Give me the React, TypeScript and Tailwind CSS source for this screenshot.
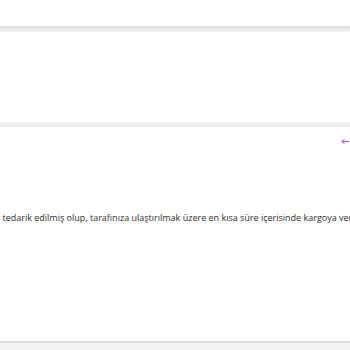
import React from 'react';

const App: React.FC = () => {
    return (
        <div className="w-[350px] h-[350px] overflow-hidden bg-white flex flex-col font-['Open_Sans',sans-serif]">
            {/* top strip */}
            <div className="h-[26px] bg-white" />
            <div className="h-[6px] bg-gradient-to-b from-[#dedede] to-[#f4f4f4]" />

            {/* first panel */}
            <div className="h-[90px] bg-white" />
            <div className="h-[5px] bg-gradient-to-b from-[#f1f1f1] to-[#ececec]" />

            {/* second panel */}
            <div className="h-[214px] bg-white overflow-hidden">
                <div className="flex justify-end pr-[1px] pt-[11px] h-[19px]">
                    <svg width="8" height="7" viewBox="0 0 8 7" fill="none" stroke="#a24fc2" strokeWidth="1">
                        <path d="M8 3.5H1M3.5 1L1 3.5L3.5 6" />
                    </svg>
                </div>
                <p className="mt-[67px] ml-[-9.5px] whitespace-nowrap text-[9px] leading-none text-[#2f2f2f]">
                    ile tedarik edilmiş olup, tarafınıza ulaştırılmak üzere en kısa süre içerisinde kargoya verilecektir.
                </p>
            </div>

            <div className="h-[2px] bg-[#dcdcdc]" />
            <div className="flex-1 bg-[#f3f3f3]" />
        </div>
    );
};

export default App;
